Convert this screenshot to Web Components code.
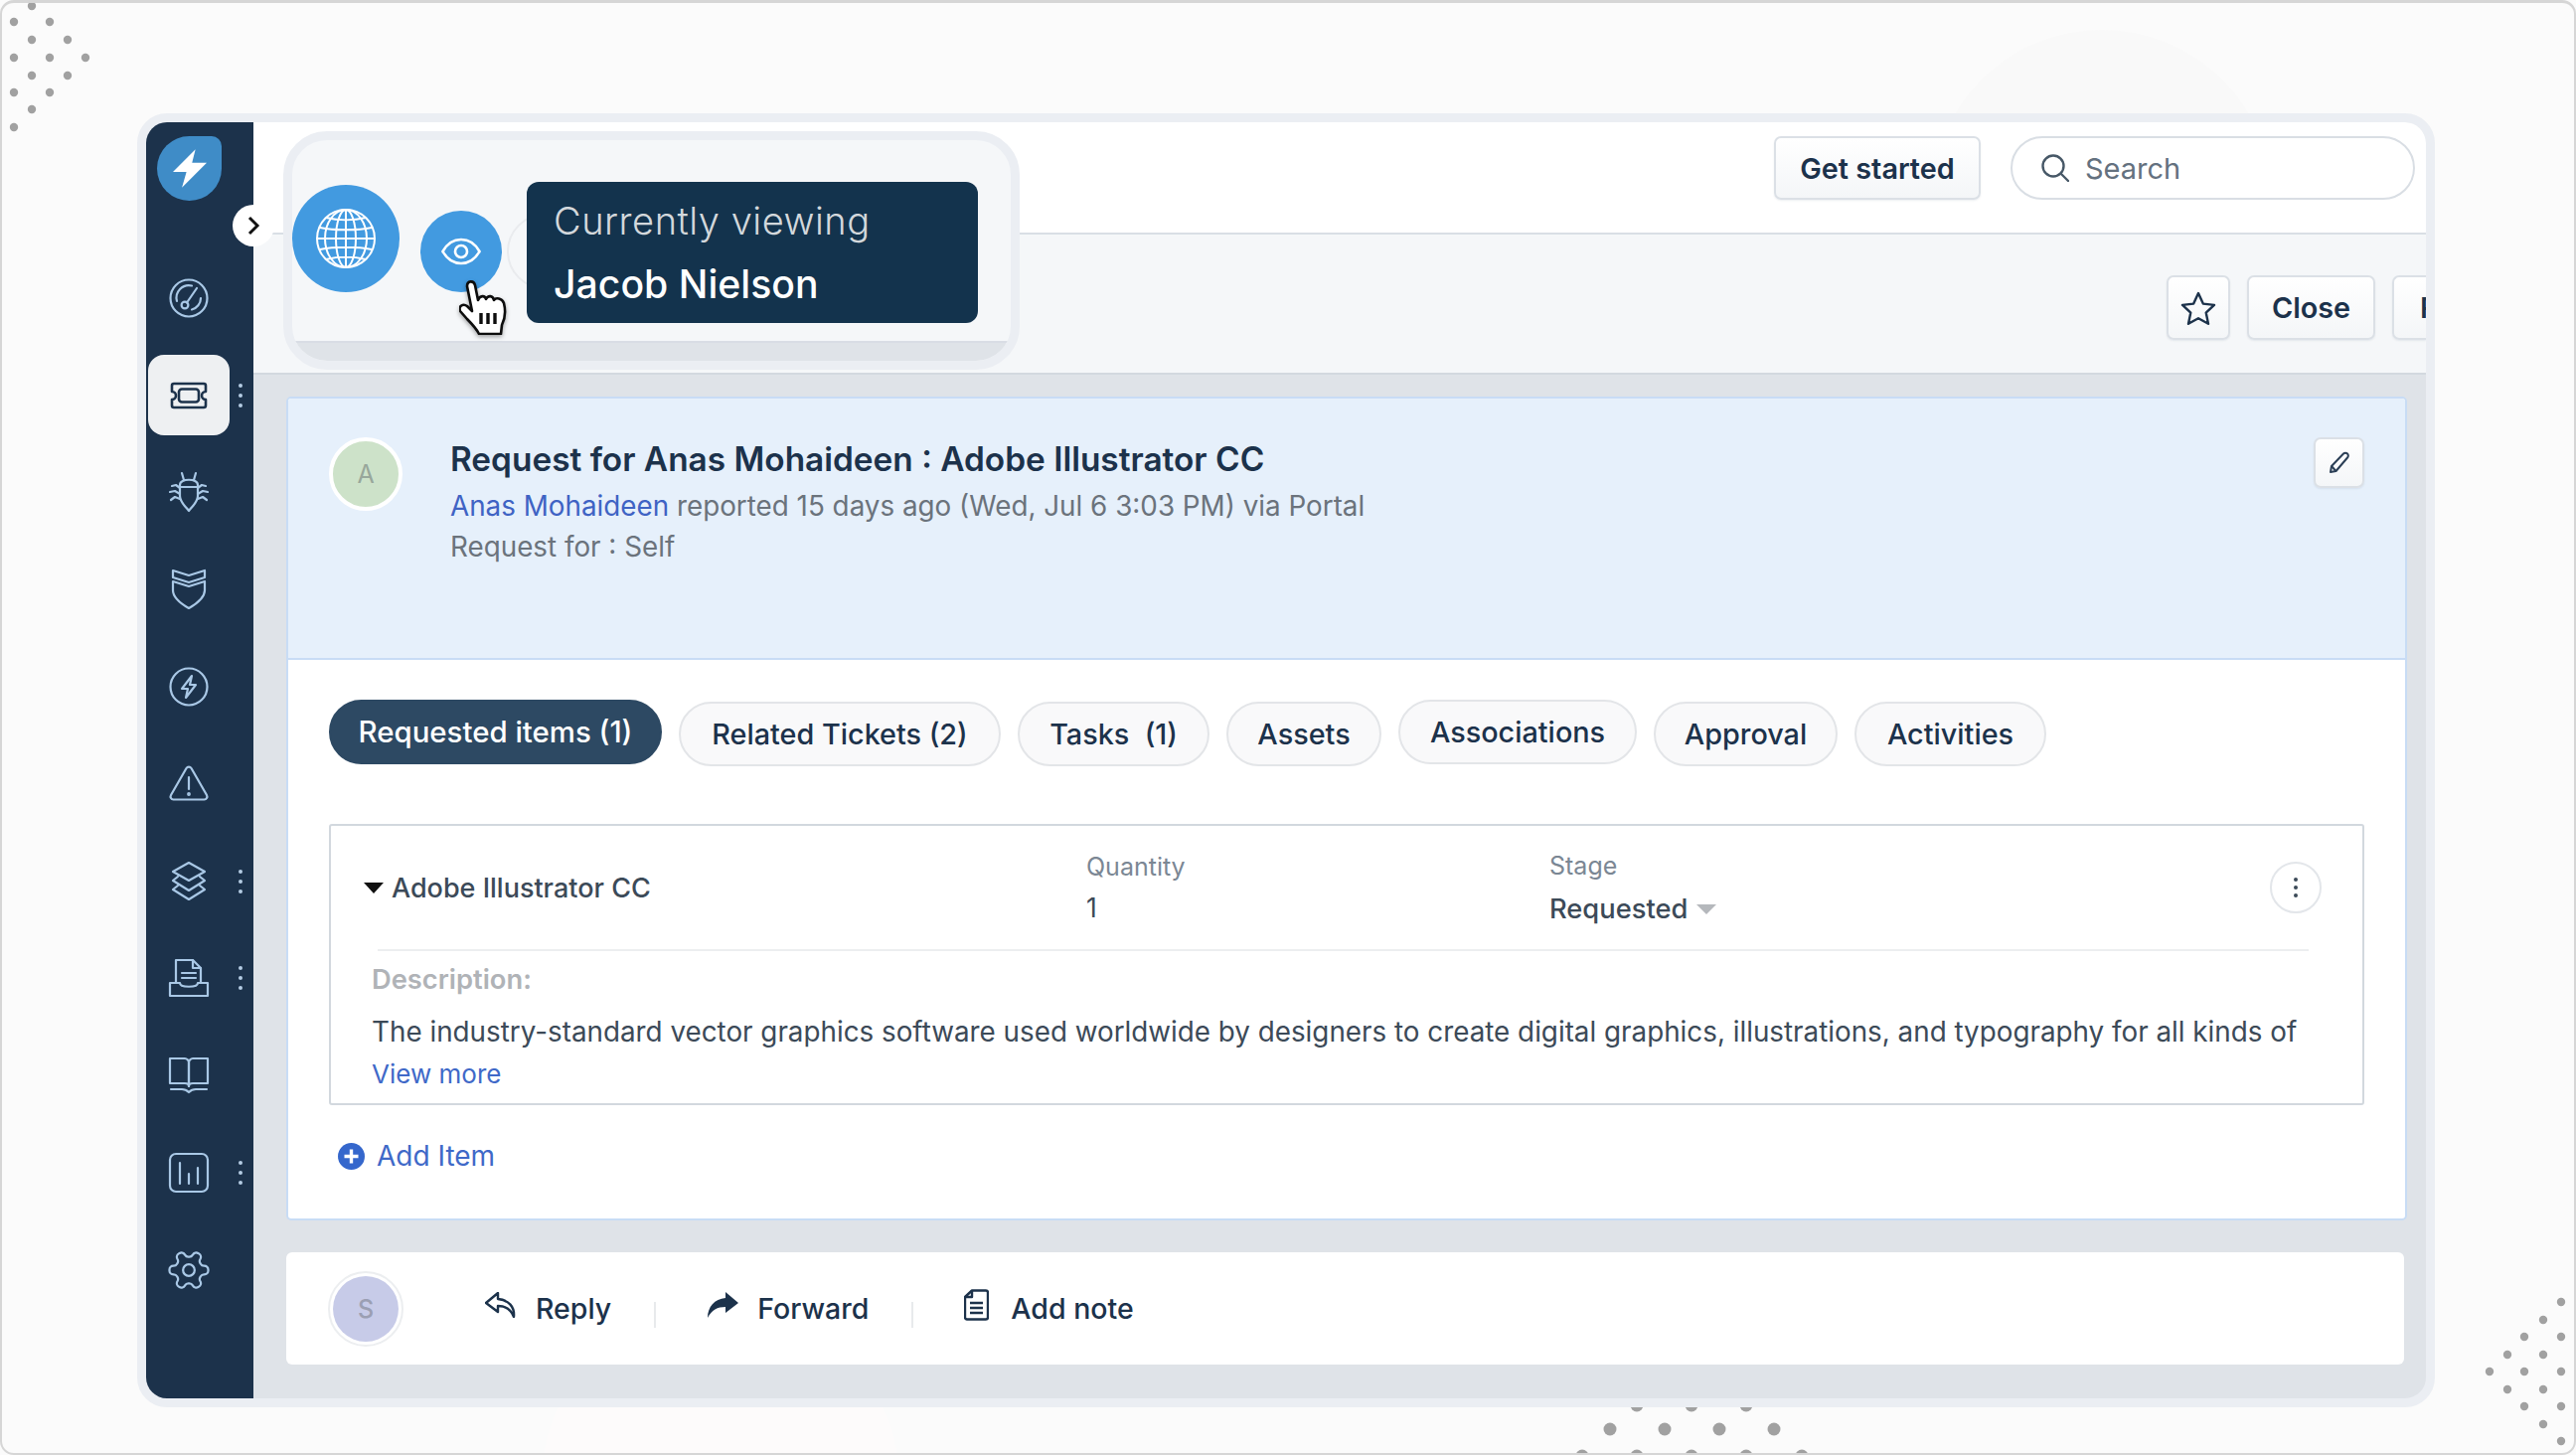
<!DOCTYPE html>
<html lang="en">
<head>
<meta charset="utf-8">
<title>Ticket</title>
<style>
  html, body { margin: 0; height: 100%; }
  body {
    width: 2592px;
    height: 1464px;
    box-sizing: border-box;
    padding: 114px 0 0 138px;
    background: #fbfbfb;
    font-family: Inter, "Liberation Sans", sans-serif;
    color: #1c324b;
    overflow: hidden;
    position: relative;
  }
</style>
</head>
<body>
<page-backdrop></page-backdrop>
<app-frame>
  <side-nav slot="nav"></side-nav>
  <top-bar></top-bar>
  <sub-bar></sub-bar>
  <ticket-card></ticket-card>
  <reply-bar></reply-bar>
  <nav-toggle slot="over"></nav-toggle>
  <lens-popover slot="over"></lens-popover>
</app-frame>

<script>
const ICONS = {
  gauge: '<circle cx="19" cy="19" r="18.500"/><path d="M7 22a12.500 12.500 0 0 1 15-15.500"/><path d="M31 19a12 12 0 0 1-9 11.500"/><circle cx="15" cy="26" r="3.400"/><path d="M17 23.500 27 9"/>',
  ticket: '<path d="M4 7h30a2 2 0 0 1 2 2v6a4 4 0 0 0 0 8v6a2 2 0 0 1-2 2H4a2 2 0 0 1-2-2v-6a4 4 0 0 0 0-8V9a2 2 0 0 1 2-2z"/><rect x="9" y="12.500" width="20" height="13" rx="3"/>',
  bug: '<path d="M12 0l2 7M26 0l-2 7"/><path d="M10 12c0-7 18-7 18 0v11c0 6-5 10-9 15-4-5-9-9-9-15z"/><path d="M10 14h18"/><path d="M10 15 6 12 2 13M10 21l-5-3-5 1M10 26l-5-2-4 3M28 15l4-3 4 1M28 21l5-3 5 1M28 26l5-2 4 3"/>',
  shield: '<path d="M3 0l16 5 16-5v7L19 12 3 7z"/><path d="M3 11l16 5 16-5v9c0 8-9 14-16 18-7-4-16-10-16-18z"/>',
  bolt: '<circle cx="19" cy="19" r="18.500"/><path d="M22 8 12 21h6l-2 9 10-13h-6z"/>',
  alert: '<path d="M16.500 3a3 3 0 0 1 5 0l15.500 27a3 3 0 0 1-2.500 4.500H3.500a3 3 0 0 1-2.500-4.500z"/><path d="M19 12v12"/><circle cx="19" cy="29" r=".8"/>',
  layers: '<path d="M19 0l16 9-16 9-16-9z"/><path d="M8 14l-5 4 16 10 16-10-5-4"/><path d="M8 23l-5 4 16 10 16-10-5-4"/>',
  doc: '<path d="M6 24V1h17l8 8v15"/><path d="M23 1v8h8"/><path d="M12 14h14M12 19h14"/><path d="M0 24h10c0 5 18 5 18 0h10v13H0z"/>',
  book: '<path d="M0 2h15c2 0 4 2 4 4v24c0-2-2-3-4-3H0z"/><path d="M38 2H23c-2 0-4 2-4 4v24c0-2 2-3 4-3h15z"/><path d="M1 33h11c3 0 5 1 7 3 2-2 4-3 7-3h11"/>',
  chart: '<rect x="0" y="0" width="38" height="38" rx="6"/><path d="M10 9v21M19 20v10M28 14v16"/>',
  gear: '<g transform="translate(19 19) rotate(90) scale(1.950) translate(-12 -12)" stroke-width="1.150"><path d="M12.220 2h-.44a2 2 0 0 0-2 2v.18a2 2 0 0 1-1 1.730l-.43.25a2 2 0 0 1-2 0l-.15-.08a2 2 0 0 0-2.730.73l-.22.38a2 2 0 0 0 .73 2.730l.15.1a2 2 0 0 1 1 1.720v.51a2 2 0 0 1-1 1.740l-.15.09a2 2 0 0 0-.73 2.730l.22.38a2 2 0 0 0 2.730.73l.15-.08a2 2 0 0 1 2 0l.43.25a2 2 0 0 1 1 1.730V20a2 2 0 0 0 2 2h.44a2 2 0 0 0 2-2v-.18a2 2 0 0 1 1-1.730l.43-.25a2 2 0 0 1 2 0l.15.08a2 2 0 0 0 2.730-.73l.22-.39a2 2 0 0 0-.73-2.730l-.15-.08a2 2 0 0 1-1-1.740v-.5a2 2 0 0 1 1-1.740l.15-.09a2 2 0 0 0 .73-2.730l-.22-.38a2 2 0 0 0-2.730-.73l-.15.08a2 2 0 0 1-2 0l-.43-.25a2 2 0 0 1-1-1.730V4a2 2 0 0 0-2-2z"/><circle cx="12" cy="12" r="3"/></g>'
};

class PageBackdrop extends HTMLElement {
  connectedCallback() {
    const small = [[32,6],[14,22],[50,22],[32,40],[68,40],[14,58],[50,58],[86,58],[32,76],[68,76],[14,93],[50,93],[32,110],[14,128],
      [2577,1310],[2559,1328],[2540,1345],[2577,1345],[2523,1363],[2559,1363],[2505,1380],[2540,1380],[2577,1380],[2523,1398],[2559,1398],[2540,1415],[2577,1415],[2559,1433],[2577,1450]];
    const big = [[1647,1414],[1702,1414],[1757,1414],[1620,1438],[1675,1438],[1730,1438],[1785,1438],[1592,1465],[1647,1465],[1702,1465],[1757,1465],[1813,1465]];
    const dots = small.map(d => `<circle cx="${d[0]}" cy="${d[1]}" r="4.200"/>`).join('')
      + big.map(d => `<circle cx="${d[0]}" cy="${d[1]}" r="6.500"/>`).join('');
    this.attachShadow({ mode: 'open' });
    this.shadowRoot.innerHTML = `
      <style>
        :host {
          position: absolute;
          inset: 0;
          box-sizing: border-box;
          border: 2px solid #d6d6d6;
          border-top-width: 3px;
          border-radius: 14px;
          overflow: hidden;
        }
        svg { position: absolute; left: -2px; top: -3px; }
      </style>
      <svg width="2592" height="1464" viewBox="0 0 2592 1464">
        <circle cx="2115" cy="202" r="172" fill="#f9f9f9"/>
        <circle cx="725" cy="1492" r="180" fill="#fdfbfb"/>
        <g fill="#a1a1a1">${dots}</g>
      </svg>
    `;
  }
}
customElements.define('page-backdrop', PageBackdrop);

class AppFrame extends HTMLElement {
  connectedCallback() {
    this.attachShadow({ mode: 'open' });
    this.shadowRoot.innerHTML = `
      <style>
        :host {
          display: flex;
          position: relative;
          box-sizing: border-box;
          width: 2312px;
          height: 1302px;
          border: 9px solid #ebeef3;
          border-radius: 30px;
          overflow: hidden;
          background: #dfe3e8;
        }
        main {
          flex: 1;
          min-width: 0;
          display: flex;
          flex-direction: column;
        }
      </style>
      <slot name="nav"></slot>
      <main><slot></slot></main>
      <slot name="over"></slot>
    `;
  }
}
customElements.define('app-frame', AppFrame);

class NavItem extends HTMLElement {
  connectedCallback() {
    const active = this.hasAttribute('active');
    const more = this.hasAttribute('more');
    this.attachShadow({ mode: 'open' });
    this.shadowRoot.innerHTML = `
      <style>
        :host {
          display: flex;
          align-items: center;
          height: 97.800px;
          padding-left: 2px;
        }
        .pill {
          width: 82px;
          height: 81px;
          display: flex;
          align-items: center;
          justify-content: center;
          border-radius: 16px;
          background: ${active ? '#eef0f2' : 'transparent'};
        }
        svg {
          width: 38px;
          height: 38px;
          fill: none;
          stroke: ${active ? '#1c324b' : '#a9c8e6'};
          stroke-width: ${active ? 2.6 : 2.2};
          stroke-linejoin: round;
          stroke-linecap: round;
          overflow: visible;
        }
        .more {
          margin-left: 9px;
          width: 4px;
          height: 24px;
          display: flex;
          flex-direction: column;
          justify-content: space-between;
        }
        .more i { height: 4px; border-radius: 50%; background: #b4cce3; }
      </style>
      <div class="pill"><svg viewBox="0 0 38 38">${ICONS[this.getAttribute('icon')]}</svg></div>
      ${more ? '<div class="more"><i></i><i></i><i></i></div>' : ''}
    `;
  }
}
customElements.define('nav-item', NavItem);

class SideNav extends HTMLElement {
  connectedCallback() {
    this.attachShadow({ mode: 'open' });
    this.shadowRoot.innerHTML = `
      <style>
        :host {
          display: block;
          flex: none;
          width: 108px;
          box-sizing: border-box;
          padding-top: 14px;
          background: #1c324b;
        }
        .logo {
          width: 65px;
          height: 65px;
          margin: 0 0 49px 11px;
          display: flex;
          align-items: center;
          justify-content: center;
          background: #3f8cc7;
          border-radius: 50% 10px 50% 50%;
        }
      </style>
      <div class="logo">
        <svg width="34" height="39" viewBox="0 0 30 34"><path d="M20 0 0 20h12L8 34l22-22H17z" fill="#fff"/></svg>
      </div>
      <nav-item icon="gauge"></nav-item>
      <nav-item icon="ticket" active more></nav-item>
      <nav-item icon="bug"></nav-item>
      <nav-item icon="shield"></nav-item>
      <nav-item icon="bolt"></nav-item>
      <nav-item icon="alert"></nav-item>
      <nav-item icon="layers" more></nav-item>
      <nav-item icon="doc" more></nav-item>
      <nav-item icon="book"></nav-item>
      <nav-item icon="chart" more></nav-item>
      <nav-item icon="gear"></nav-item>
    `;
  }
}
customElements.define('side-nav', SideNav);

class NavToggle extends HTMLElement {
  connectedCallback() {
    this.attachShadow({ mode: 'open' });
    this.shadowRoot.innerHTML = `
      <style>
        :host {
          position: absolute;
          left: 87px;
          top: 83px;
          width: 42px;
          height: 42px;
          display: flex;
          align-items: center;
          justify-content: center;
          border-radius: 50%;
          background: #fff;
        }
      </style>
      <svg width="14" height="20" viewBox="0 0 14 20" fill="none" stroke="#111" stroke-width="3"><path d="M3 2l8 8-8 8"/></svg>
    `;
  }
}
customElements.define('nav-toggle', NavToggle);

class UiButton extends HTMLElement {
  connectedCallback() {
    this.attachShadow({ mode: 'open' });
    this.shadowRoot.innerHTML = `
      <style>
        :host {
          display: flex;
          flex: none;
          align-items: center;
          justify-content: center;
          box-sizing: border-box;
          border: 2px solid #dbe0e6;
          border-radius: 7px;
          background: linear-gradient(#ffffff, #f4f6f8);
          box-shadow: 0 1px 2px rgba(18, 52, 77, .08);
          font: 600 28.800px Inter, "Liberation Sans", sans-serif;
          color: #1c324b;
        }
      </style>
      <slot></slot>
    `;
  }
}
customElements.define('ui-button', UiButton);

class TopBar extends HTMLElement {
  connectedCallback() {
    this.attachShadow({ mode: 'open' });
    this.shadowRoot.innerHTML = `
      <style>
        :host {
          display: flex;
          flex: none;
          justify-content: flex-end;
          align-items: flex-start;
          gap: 30px;
          box-sizing: border-box;
          height: 113px;
          padding: 14px 11px 0 0;
          background: #fff;
          border-bottom: 2px solid #d9dfe5;
        }
        ui-button { width: 208px; height: 64px; }
        .search {
          width: 407px;
          height: 64px;
          box-sizing: border-box;
          display: flex;
          align-items: center;
          gap: 16px;
          padding-left: 29px;
          border: 2px solid #d9dee4;
          border-radius: 32px;
          font: 400 29px Inter, "Liberation Sans", sans-serif;
          color: #64717f;
        }
      </style>
      <ui-button>Get started</ui-button>
      <div class="search">
        <svg width="28" height="28" viewBox="0 0 28 28" fill="none" stroke="#475867" stroke-width="2.400" stroke-linecap="round"><circle cx="12" cy="12" r="10.500"/><path d="M20 20l7 7"/></svg>
        Search
      </div>
    `;
  }
}
customElements.define('top-bar', TopBar);

class SubBar extends HTMLElement {
  connectedCallback() {
    this.attachShadow({ mode: 'open' });
    this.shadowRoot.innerHTML = `
      <style>
        :host {
          display: flex;
          flex: none;
          justify-content: flex-end;
          align-items: flex-start;
          box-sizing: border-box;
          height: 141px;
          padding-top: 41px;
          background: #f5f7f9;
          border-bottom: 2px solid #d3d9df;
        }
        ui-button { height: 65px; }
        .star { width: 64px; margin-right: 17px; }
        .close { width: 129px; margin-right: 17px; }
        .cut {
          width: 34px;
          justify-content: flex-start;
          padding-left: 26px;
          border-right: 0;
          border-radius: 7px 0 0 7px;
          overflow: hidden;
        }
      </style>
      <ui-button class="star">
        <svg width="36" height="34" viewBox="0 0 36 34" fill="none" stroke="#1c324b" stroke-width="2.400" stroke-linejoin="round"><path d="M18 2l4.800 10.600 11.200 1.300-8.300 7.700 2.300 11.200L18 27.200 8 32.800l2.300-11.200L2 13.900l11.200-1.300z"/></svg>
      </ui-button>
      <ui-button class="close">Close</ui-button>
      <ui-button class="cut">F</ui-button>
    `;
  }
}
customElements.define('sub-bar', SubBar);

class TicketTab extends HTMLElement {
  connectedCallback() {
    const on = this.hasAttribute('on');
    const up = this.hasAttribute('up');
    this.attachShadow({ mode: 'open' });
    this.shadowRoot.innerHTML = `
      <style>
        :host {
          display: flex;
          flex: none;
          align-items: center;
          justify-content: center;
          box-sizing: border-box;
          height: 65px;
          margin-top: ${up ? 0 : 2}px;
          border-radius: 33px;
          border: 2px solid ${on ? '#2d4963' : '#e3e5e8'};
          background: ${on ? '#2d4963' : '#f9f9fa'};
          color: ${on ? '#fff' : '#1c324b'};
          font: ${on ? '500 29.400px' : '500 28.800px'} Inter, "Liberation Sans", sans-serif;
        }
        slot { white-space: pre; }
      </style>
      <slot></slot>
    `;
  }
}
customElements.define('ticket-tab', TicketTab);

class ItemBox extends HTMLElement {
  connectedCallback() {
    this.attachShadow({ mode: 'open' });
    this.shadowRoot.innerHTML = `
      <style>
        :host {
          display: block;
          box-sizing: border-box;
          height: 283px;
          border: 2px solid #d2d8de;
          border-radius: 3px;
          background: #fff;
          font-family: Inter, "Liberation Sans", sans-serif;
        }
        .row {
          display: grid;
          grid-template-columns: 727px 466px 1fr 52px;
          align-items: center;
          height: 124px;
          padding: 0 41px 0 33px;
        }
        .name {
          display: flex;
          align-items: center;
          gap: 8px;
          font-size: 27px;
          font-weight: 500;
          color: #3c4a58;
        }
        .name i {
          width: 0;
          height: 0;
          border: 10px solid transparent;
          border-top: 11px solid #111;
          border-bottom: 0;
        }
        .col { margin-top: 4px; }
        .label { font-size: 25px; line-height: 36px; color: #7b8794; }
        .value { font-size: 26.500px; line-height: 46px; color: #3c4a58; }
        .stage { margin-top: 3px; font-size: 27.300px; font-weight: 500; display: flex; align-items: center; gap: 9px; }
        .stage i {
          width: 0;
          height: 0;
          border: 10px solid transparent;
          border-top: 10px solid #b5b8bc;
          border-bottom: 0;
        }
        .kebab {
          width: 52px;
          height: 52px;
          box-sizing: border-box;
          border: 2px solid #e3e6ea;
          border-radius: 50%;
          display: flex;
          flex-direction: column;
          align-items: center;
          justify-content: center;
          gap: 4px;
        }
        .kebab b { width: 4px; height: 4px; border-radius: 50%; background: #3c4a58; }
        hr { height: 2px; margin: 0 54px 0 47px; border: 0; background: #eceef0; }
        .desc { padding: 11px 41px 0; }
        .desc h4 { margin: 0; font-size: 27.300px; font-weight: 600; line-height: 36px; color: #b0b3b7; }
        .desc p { margin: 14px 0 0; font-size: 27.800px; line-height: 40px; color: #3c4a58; white-space: nowrap; }
        .desc a { display: block; margin-top: 3px; font-size: 26px; line-height: 40px; color: #3f69c8; }
      </style>
      <div class="row">
        <div class="name"><i></i>Adobe Illustrator CC</div>
        <div class="col">
          <div class="label">Quantity</div>
          <div class="value">1</div>
        </div>
        <div class="col">
          <div class="label">Stage</div>
          <div class="value stage">Requested<i></i></div>
        </div>
        <div class="kebab"><b></b><b></b><b></b></div>
      </div>
      <hr>
      <div class="desc">
        <h4>Description:</h4>
        <p>The industry-standard vector graphics software used worldwide by designers to create digital graphics, illustrations, and typography for all kinds of</p>
        <a>View more</a>
      </div>
    `;
  }
}
customElements.define('item-box', ItemBox);

class TicketCard extends HTMLElement {
  connectedCallback() {
    this.attachShadow({ mode: 'open' });
    this.shadowRoot.innerHTML = `
      <style>
        :host {
          display: block;
          flex: none;
          box-sizing: border-box;
          height: 829px;
          margin: 22px 19px 0 33px;
          border: 2px solid #c8dcf5;
          border-radius: 5px;
          background: #fff;
          overflow: hidden;
          font-family: Inter, "Liberation Sans", sans-serif;
        }
        .head {
          display: flex;
          align-items: flex-start;
          box-sizing: border-box;
          height: 263px;
          padding: 39px 41px 0 41px;
          background: #e6f0fb;
          border-bottom: 2px solid #c8dcf5;
        }
        .avatar {
          flex: none;
          width: 74px;
          height: 74px;
          box-sizing: border-box;
          margin-right: 48px;
          border: 4px solid #fff;
          border-radius: 50%;
          background: #cde2c9;
          display: flex;
          align-items: center;
          justify-content: center;
          font-size: 25px;
          color: #98a79b;
        }
        .text { flex: 1; }
        h1 { margin: 0; font-size: 33.400px; line-height: 44px; font-weight: 600; color: #1c324b; }
        .line { font-size: 27.800px; line-height: 41px; color: #6b737c; }
        .line a { color: #3f63c4; }
        .first { margin-top: 5px; }
        .edit { width: 51px; height: 51px; }
        .body { padding: 40px 41px 0; }
        .tabs { display: flex; align-items: flex-start; gap: 17px; margin-bottom: 58px; }
        .add {
          display: flex;
          align-items: center;
          gap: 12px;
          margin: 33px 0 0 9px;
          height: 36px;
          font-size: 28px;
          color: #3f69c8;
        }
      </style>
      <div class="head">
        <div class="avatar">A</div>
        <div class="text">
          <h1>Request for Anas Mohaideen : Adobe Illustrator CC</h1>
          <div class="line first"><a>Anas Mohaideen</a> reported 15 days ago (Wed, Jul 6 3:03 PM) via Portal</div>
          <div class="line">Request for : Self</div>
        </div>
        <ui-button class="edit">
          <svg width="24" height="24" viewBox="0 0 24 24" fill="none" stroke="#2b3f56" stroke-width="2" stroke-linejoin="round"><path d="M3 21l1-6L16 2.500a2.400 2.400 0 0 1 4 4L8.500 20z"/><path d="M4 15l4.500 5"/></svg>
        </ui-button>
      </div>
      <div class="body">
        <div class="tabs">
          <ticket-tab on up style="width:335px">Requested items (1)</ticket-tab>
          <ticket-tab style="width:324px">Related Tickets (2)</ticket-tab>
          <ticket-tab style="width:193px">Tasks  (1)</ticket-tab>
          <ticket-tab style="width:156px">Assets</ticket-tab>
          <ticket-tab up style="width:240px">Associations</ticket-tab>
          <ticket-tab style="width:185px">Approval</ticket-tab>
          <ticket-tab style="width:193px">Activities</ticket-tab>
        </div>
        <item-box></item-box>
        <div class="add">
          <svg width="27" height="27" viewBox="0 0 27 27"><circle cx="13.500" cy="13.500" r="13.500" fill="#3567cc"/><path d="M13.500 6.500v14M6.500 13.500h14" stroke="#fff" stroke-width="3.400"/></svg>
          Add Item
        </div>
      </div>
    `;
  }
}
customElements.define('ticket-card', TicketCard);

class ReplyBar extends HTMLElement {
  connectedCallback() {
    this.attachShadow({ mode: 'open' });
    this.shadowRoot.innerHTML = `
      <style>
        :host {
          display: flex;
          flex: none;
          align-items: center;
          box-sizing: border-box;
          height: 113px;
          margin: 32px 22px 0 33px;
          padding-left: 42px;
          background: #fff;
          border-radius: 6px;
          font: 500 28.500px Inter, "Liberation Sans", sans-serif;
          color: #1c324b;
        }
        .avatar {
          flex: none;
          width: 76px;
          height: 76px;
          box-sizing: border-box;
          margin-right: 82px;
          border: 2px solid #eceef0;
          border-radius: 50%;
          padding: 3px;
          background-clip: padding-box;
        }
        .avatar span {
          display: flex;
          align-items: center;
          justify-content: center;
          height: 100%;
          border-radius: 50%;
          background: #c7cbe8;
          color: #9b9fb3;
          font-size: 25px;
        }
        .act { display: flex; align-items: center; gap: 19px; }
        .act svg { margin-top: -8px; }
        .sep { width: 2px; height: 26px; margin: 12px 51px 0 43px; background: #e8eaec; }
      </style>
      <div class="avatar"><span>S</span></div>
      <div class="act">
        <svg width="32" height="26" viewBox="0 0 32 26" fill="none" stroke="#1c324b" stroke-width="2.400" stroke-linejoin="round"><path d="M13 1 1 11l12 9v-6c8 0 13 3 16 11 1-10-5-17-16-18z"/></svg>
        Reply
      </div>
      <i class="sep"></i>
      <div class="act">
        <svg width="32" height="26" viewBox="0 0 32 26" fill="#1c324b"><path d="M19 0l13 11-13 10v-6C11 15 5 18 1 26 1 15 8 7 19 6z"/></svg>
        Forward
      </div>
      <i class="sep"></i>
      <div class="act" style="gap:22px">
        <svg width="25" height="32" viewBox="0 0 25 32" fill="none" stroke="#1c324b" stroke-width="2.400" stroke-linejoin="round"><path d="M8 1.500h14a2 2 0 0 1 2 2v25a2 2 0 0 1-2 2H3a2 2 0 0 1-2-2V8z"/><path d="M8 1.500V8H1"/><path d="M6 14h13M6 19h13M6 24h13"/></svg>
        Add note
      </div>
    `;
  }
}
customElements.define('reply-bar', ReplyBar);

class LensPopover extends HTMLElement {
  connectedCallback() {
    this.attachShadow({ mode: 'open' });
    this.shadowRoot.innerHTML = `
      <style>
        :host {
          position: absolute;
          left: 138px;
          top: 9px;
          width: 741px;
          height: 240px;
          box-sizing: border-box;
          border: 9px solid #ebeef3;
          border-radius: 44px;
          background: #f5f7f9;
          overflow: hidden;
          font-family: Inter, "Liberation Sans", sans-serif;
        }
        .row { display: flex; align-items: flex-start; height: 202px; position: relative; }
        .globe, .eye {
          flex: none;
          display: flex;
          align-items: center;
          justify-content: center;
          border-radius: 50%;
          background: #429ae0;
        }
        .globe { width: 108px; height: 108px; margin-top: 45px; }
        .globe svg { filter: blur(.7px); }
        .eye { width: 82px; height: 82px; margin: 71px 25px 0 21px; }
        .ring {
          position: absolute;
          left: 216px;
          top: 74px;
          width: 76px;
          height: 76px;
          box-sizing: border-box;
          border: 2px solid #e9ebee;
          border-radius: 50%;
        }
        .tip {
          position: relative;
          flex: none;
          width: 454px;
          height: 142px;
          box-sizing: border-box;
          margin-top: 42px;
          padding: 16px 0 0 27px;
          border-radius: 12px;
          background: #13334d;
        }
        .tip div { font-size: 38px; line-height: 46px; color: #d3d8dc; font-weight: 300; letter-spacing: .5px; }
        .tip b { display: block; margin-top: 18px; font-size: 39.200px; line-height: 46px; color: #fff; font-weight: 500; }
        .hand { position: absolute; left: 168px; top: 141px; filter: drop-shadow(0 2px 2px rgba(0,0,0,.35)); }
        .strip { height: 20px; box-sizing: border-box; background: #dfe3e8; border-top: 2px solid #d9dde5; }
      </style>
      <div class="row">
        <div class="globe">
          <svg width="62" height="62" viewBox="0 0 62 62" fill="none" stroke="#fff" stroke-width="2">
            <circle cx="31" cy="31" r="29"/>
            <ellipse cx="31" cy="31" rx="21" ry="29"/>
            <ellipse cx="31" cy="31" rx="10" ry="29"/>
            <path d="M31 2v58M2 31h58M5 20c14 3 38 3 52 0M5 42c14-3 38-3 52 0M11 10c12 3 28 3 40 0M11 52c12-3 28-3 40 0"/>
          </svg>
        </div>
        <div class="eye">
          <svg width="40" height="28" viewBox="0 0 40 28" fill="none" stroke="#fff" stroke-width="2.600"><path d="M1.500 14C6 6 13 2 20 2s14 4 18.500 12C34 22 27 26 20 26S6 22 1.500 14z"/><circle cx="20" cy="14" r="6"/></svg>
        </div>
        <div class="ring"></div>
        <div class="tip">
          <div>Currently viewing</div>
          <b>Jacob Nielson</b>
        </div>
        <svg class="hand" width="48" height="55" viewBox="0 0 48 55" stroke="#0d0d0d" stroke-width="2.600" stroke-linejoin="round">
          <path fill="#fff" d="M8 6c0-6 7-6 8-1l3 15c2-5 7-5 8-1 2-4 7-4 8 1 2-3 8-2 10 3 2 8 1 16-2 22l-1 9H20c-3-6-8-11-12-15l-7-8c-2-5 3-8 7-5l5 5z"/>
          <path fill="none" stroke-width="3.400" d="M22 33v11M29 33v11M36 33v11"/>
        </svg>
      </div>
      <div class="strip"></div>
    `;
  }
}
customElements.define('lens-popover', LensPopover);
</script>
</body>
</html>
